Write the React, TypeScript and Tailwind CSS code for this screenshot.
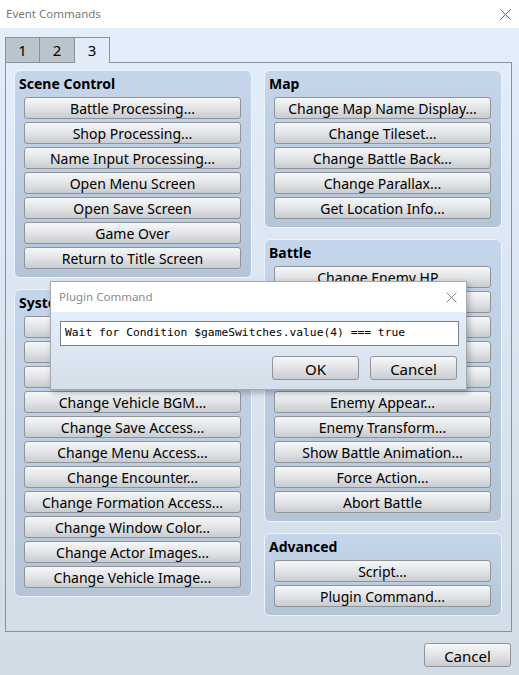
import React from 'react';

const ui = { fontFamily: '"Noto Sans", "DejaVu Sans", sans-serif' };
const mono = { fontFamily: '"DejaVu Sans Mono", "Liberation Mono", monospace' };

const Btn = ({ label, className = '' }: { label: string; className?: string }) => (
  <div
    className={`flex items-center justify-center rounded-[3px] border border-[#8e949a] bg-gradient-to-b from-[#f6f7f8] via-[#e2e4e6] to-[#c9ccd0] pt-[2px] leading-none text-black ${className}`}
  >
    {label}
  </div>
);

const Group = ({ title, items }: { title: string; items: string[] }) => (
  <div className="flex flex-col rounded-[6px] border border-[#eef3fa] bg-gradient-to-b from-[#c5d6ec] to-[#b5c5d8] pl-[9px] pr-[10px] pb-[8px]">
    <div className="-ml-[5px] pt-[4px] mb-[4px] h-[22px] text-[14px] font-bold leading-[18px] text-black">{title}</div>
    <div className="flex flex-col gap-[3px]">
      {items.map((t) => (
        <Btn key={t} label={t} className="h-[22px] text-[14px]" />
      ))}
    </div>
  </div>
);

const CloseX = ({ color = '#555' }: { color?: string }) => (
  <svg width="11" height="11" viewBox="0 0 11 11">
    <path d="M0.5 0.5 L10.5 10.5 M10.5 0.5 L0.5 10.5" stroke={color} strokeWidth="1" fill="none" />
  </svg>
);

export default function App() {
  const scene = [
    'Battle Processing...',
    'Shop Processing...',
    'Name Input Processing...',
    'Open Menu Screen',
    'Open Save Screen',
    'Game Over',
    'Return to Title Screen',
  ];
  const system = [
    'Change Battle BGM...',
    'Change Victory ME...',
    'Change Defeat ME...',
    'Change Vehicle BGM...',
    'Change Save Access...',
    'Change Menu Access...',
    'Change Encounter...',
    'Change Formation Access...',
    'Change Window Color...',
    'Change Actor Images...',
    'Change Vehicle Image...',
  ];
  const map = [
    'Change Map Name Display...',
    'Change Tileset...',
    'Change Battle Back...',
    'Change Parallax...',
    'Get Location Info...',
  ];
  const battle = [
    'Change Enemy HP...',
    'Change Enemy MP...',
    'Change Enemy TP...',
    'Change Enemy State...',
    'Enemy Recover All...',
    'Enemy Appear...',
    'Enemy Transform...',
    'Show Battle Animation...',
    'Force Action...',
    'Abort Battle',
  ];

  return (
    <div className="relative flex h-[675px] w-[519px] flex-col overflow-hidden bg-white" style={ui}>
      {/* Title bar */}
      <div className="flex h-[28px] shrink-0 items-center justify-between bg-white pl-[6px] pr-[8px]">
        <span className="text-[11.5px] text-[#7a7a7a]">Event Commands</span>
        <CloseX color="#666" />
      </div>

      {/* Body */}
      <div className="flex flex-1 flex-col bg-gradient-to-b from-[#e3eefb] to-[#d2dce6] pt-[9px]">
        {/* Tabs */}
        <div className="ml-[5px] flex h-[25px] items-end">
          <div className="flex h-[25px] w-[35px] items-center justify-center border border-b-0 border-[#8c9197] bg-[#bac4cd] text-[15px] text-black">1</div>
          <div className="flex h-[25px] w-[35px] items-center justify-center border border-b-0 border-l-0 border-[#8c9197] bg-[#bac4cd] text-[15px] text-black">2</div>
          <div className="relative z-10 -mb-px flex h-[26px] w-[35px] items-center justify-center border border-b-0 border-l-0 border-[#8c9197] bg-[#e2ecf8] pb-px text-[15px] text-black">3</div>
        </div>

        {/* Tab panel */}
        <div className="ml-[5px] mr-[7px] flex h-[570px] gap-[12px] border border-[#8c9197] pl-[8px] pr-[9px] pt-[7px]">
          <div className="flex w-[238px] flex-col gap-[11px]">
            <Group title="Scene Control" items={scene} />
            <Group title="System Settings" items={system} />
          </div>
          <div className="flex w-[238px] flex-col gap-[11px]">
            <Group title="Map" items={map} />
            <Group title="Battle" items={battle} />
            <Group title="Advanced" items={['Script...', 'Plugin Command...']} />
          </div>
        </div>

        <div className="flex justify-end pr-[8px] pt-[11px]">
          <Btn label="Cancel" className="h-[24px] w-[87px] text-[15px]" />
        </div>
      </div>

      {/* Plugin Command dialog */}
      <div className="absolute left-[50px] top-[281px] flex h-[109px] w-[417px] flex-col border border-[#a3a9b0] shadow-[2px_3px_6px_rgba(0,0,0,0.25)]">
        <div className="flex h-[30px] shrink-0 items-center justify-between bg-white pl-[8px] pr-[9px]">
          <span className="text-[11.5px] text-[#8a8a8a]">Plugin Command</span>
          <CloseX color="#888" />
        </div>
        <div className="flex flex-1 flex-col bg-gradient-to-b from-[#e3eefb] to-[#d5dfea] px-[9px] pt-[9px]">
          <div className="flex h-[25px] w-[399px] items-center border border-[#7c8086] bg-white pl-[4px] text-[11.3px] text-black" style={mono}>
            Wait for Condition $gameSwitches.value(4) === true
          </div>
          <div className="mt-[10px] flex justify-end gap-[11px]">
            <Btn label="OK" className="h-[24px] w-[87px] text-[15px]" />
            <Btn label="Cancel" className="h-[24px] w-[87px] text-[15px]" />
          </div>
        </div>
      </div>
    </div>
  );
}
